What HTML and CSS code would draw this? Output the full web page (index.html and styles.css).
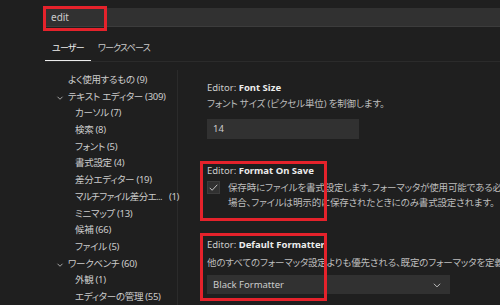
FILE: index.html
```html
<!DOCTYPE html>
<html lang="ja">
<head>
  <meta charset="utf-8">
  <title>設定</title>
  <link rel="stylesheet" href="styles.css">
</head>
<body>
  <div class="page">
    <div class="search-row">
      <div class="search">edit</div>
      <div class="mark mark-search"></div>
    </div>

    <div class="tabs">
      <div class="tab active">ユーザー</div>
      <div class="tab">ワークスペース</div>
    </div>

    <div class="main">
      <div class="tree">
        <div class="row top">よく使用するもの (9)</div>
        <div class="row top"><svg class="chev" width="8" height="8" viewBox="0 0 16 16"><path d="M3 5.5l5 5 5-5" fill="none" stroke="#c8c8c8" stroke-width="1.6"/></svg>テキスト エディター (309)</div>
        <div class="row child">カーソル (7)</div>
        <div class="row child">検索 (8)</div>
        <div class="row child">フォント (5)</div>
        <div class="row child">書式設定 (4)</div>
        <div class="row child">差分エディター (19)</div>
        <div class="row child split"><span class="clip">マルチファイル差分エ...</span><span class="count">(1)</span></div>
        <div class="row child">ミニマップ (13)</div>
        <div class="row child">候補 (66)</div>
        <div class="row child">ファイル (5)</div>
        <div class="row top"><svg class="chev" width="8" height="8" viewBox="0 0 16 16"><path d="M3 5.5l5 5 5-5" fill="none" stroke="#c8c8c8" stroke-width="1.6"/></svg>ワークベンチ (60)</div>
        <div class="row child">外観 (1)</div>
        <div class="row child">エディターの管理 (55)</div>
      </div>

      <div class="settings">
        <div class="setting s-font">
          <div class="title">Editor: <b>Font Size</b></div>
          <div class="desc">フォント サイズ (ピクセル単位) を制御します。</div>
          <div class="input">14</div>
        </div>

        <div class="setting s-save">
          <div class="title">Editor: <b>Format On Save</b></div>
          <div class="check-row">
            <div class="checkbox">
              <svg width="11" height="11" viewBox="0 0 16 16"><path d="M2.5 8.5l3.5 3.5 7.5-8" fill="none" stroke="#c8c8c8" stroke-width="1.4"/></svg>
            </div>
            <div class="desc lines">保存時にファイルを書式設定します。フォーマッタが使用可能である必要があります。<br>場合、ファイルは明示的に保存されたときにのみ書式設定されます。</div>
          </div>
          <div class="mark mark-save"></div>
        </div>

        <div class="setting s-fmt">
          <div class="title">Editor: <b>Default Formatter</b></div>
          <div class="desc">他のすべてのフォーマッタ設定よりも優先される、既定のフォーマッタを定義します。</div>
          <div class="select">
            <span>Black Formatter</span>
            <svg width="10" height="10" viewBox="0 0 16 16"><path d="M3 6l5 5 5-5" fill="none" stroke="#c8c8c8" stroke-width="1.5"/></svg>
          </div>
          <div class="mark mark-fmt"></div>
        </div>
      </div>
    </div>
  </div>
</body>
</html>
```

FILE: styles.css
```css
:root {
  --bg: #1f1f1f;
  --field: #313131;
  --field-border: #3c3c3c;
  --line: #2b2b2b;
  --text: #cccccc;
  --text-dim: #bdbdbd;
  --strong: #ececec;
  --mark: #e5222b;
}

body {
  margin: 0;
  background-color: var(--bg);
  color: var(--text);
  font-family: "Noto Sans", "Noto Sans CJK JP", sans-serif;
  font-feature-settings: "palt";
  font-size: 9.5px;
}

.page {
  width: 500px;
  height: 305px;
  overflow: hidden;
  background-color: var(--bg);
}

.search-row {
  position: relative;
  padding: 8px 0 0 43px;
}

.search {
  height: 18px;
  line-height: 18px;
  padding-left: 8px;
  background-color: var(--field);
  border-bottom: 1px solid var(--field-border);
  color: var(--text);
  font-size: 10px;
}

.mark {
  position: absolute;
  border: 3px solid var(--mark);
  box-sizing: border-box;
}

.mark-search {
  left: 43px;
  top: 6px;
  width: 64px;
  height: 25px;
}

.tabs {
  display: flex;
  margin: 10px 0 0 45px;
  height: 24px;
  border-bottom: 1px solid var(--line);
  font-size: 9px;
  letter-spacing: -0.8px;
}

.tab {
  padding: 0 7px 0 7px;
  line-height: 22px;
  color: var(--text);
}

.tab.active {
  color: var(--strong);
  border-bottom: 1px solid var(--strong);
}

.main {
  display: flex;
}

.tree {
  width: 178px;
  margin-top: 8px;
  padding-top: 2px;
  border-right: 1px solid var(--line);
  box-sizing: border-box;
  letter-spacing: -0.3px;
}

.row {
  height: 16.7px;
  line-height: 16.7px;
  white-space: nowrap;
  position: relative;
}

.row.top {
  padding-left: 68px;
}

.row.child {
  padding-left: 75px;
}

.chev {
  position: absolute;
  left: 56px;
  top: 5px;
}

.split {
  display: flex;
}

.clip {
  letter-spacing: -0.6px;
}

.count {
  margin-left: 7px;
}

.settings {
  flex: 1;
  padding: 19px 0 0 29px;
  overflow: hidden;
}

.setting {
  position: relative;
}

.title {
  height: 14px;
  line-height: 14px;
  white-space: nowrap;
}

.title b {
  color: var(--strong);
}

.desc {
  color: var(--text-dim);
  line-height: 14px;
  white-space: nowrap;
  letter-spacing: -0.15px;
}

.s-font .desc {
  margin-top: 2px;
}

.input {
  margin-top: 8px;
  width: 152px;
  height: 20px;
  line-height: 20px;
  padding-left: 6px;
  box-sizing: border-box;
  background-color: var(--field);
}

.s-save {
  margin-top: 25px;
}

.check-row {
  display: flex;
  gap: 8px;
  margin-top: 2px;
}

.checkbox {
  width: 13px;
  height: 13px;
  margin-top: 1px;
  flex-shrink: 0;
  background-color: var(--field);
  border: 1px solid var(--field-border);
  box-sizing: border-box;
  display: flex;
  align-items: center;
  justify-content: center;
}

.lines {
  line-height: 15px;
}

.mark-save {
  left: -7px;
  top: -3px;
  width: 127px;
  height: 60px;
}

.s-fmt {
  margin-top: 28px;
}

.s-fmt .desc {
  margin-top: 4px;
}

.select {
  margin-top: 5px;
  width: 243px;
  height: 19px;
  padding: 0 8px 0 6px;
  box-sizing: border-box;
  background-color: var(--field);
  display: flex;
  align-items: center;
  justify-content: space-between;
}

.mark-fmt {
  left: -7px;
  top: -5px;
  width: 127px;
  height: 68px;
}
```
